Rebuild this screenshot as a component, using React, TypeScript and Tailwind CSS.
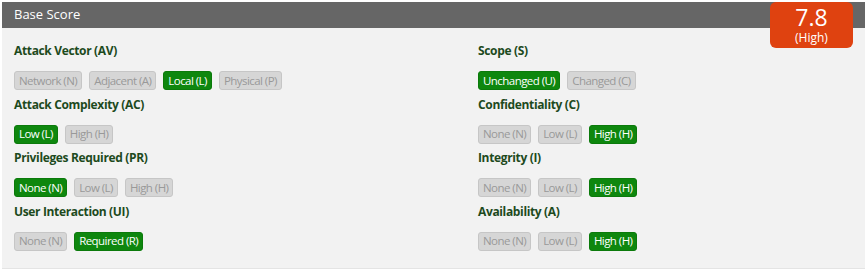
type Metric = { label: string; options: string[]; selected: number };

const left: Metric[] = [
  { label: "Attack Vector (AV)", options: ["Network (N)", "Adjacent (A)", "Local (L)", "Physical (P)"], selected: 2 },
  { label: "Attack Complexity (AC)", options: ["Low (L)", "High (H)"], selected: 0 },
  { label: "Privileges Required (PR)", options: ["None (N)", "Low (L)", "High (H)"], selected: 0 },
  { label: "User Interaction (UI)", options: ["None (N)", "Required (R)"], selected: 1 },
];

const right: Metric[] = [
  { label: "Scope (S)", options: ["Unchanged (U)", "Changed (C)"], selected: 0 },
  { label: "Confidentiality (C)", options: ["None (N)", "Low (L)", "High (H)"], selected: 2 },
  { label: "Integrity (I)", options: ["None (N)", "Low (L)", "High (H)"], selected: 2 },
  { label: "Availability (A)", options: ["None (N)", "Low (L)", "High (H)"], selected: 2 },
];

function MetricGroup({ m }: { m: Metric }) {
  return (
    <div className="flex flex-col">
      <div className="h-4 text-[12px] leading-4 font-bold tracking-[-0.35px] text-[#1d4a1d]">{m.label}</div>
      <div className="mt-3 flex gap-[7px]">
        {m.options.map((o, i) =>
          i === m.selected ? (
            <span
              key={o}
              className="flex h-[19px] items-center rounded-[3px] border border-[#0b7a0b] bg-[#0e870e] px-[4px] text-[11.5px] leading-none tracking-[-0.55px] text-white"
            >
              {o}
            </span>
          ) : (
            <span
              key={o}
              className="flex h-[19px] items-center rounded-[3px] border border-[#c6c6c6] bg-[#d6d6d6] px-[4px] text-[11.5px] leading-none tracking-[-0.55px] text-[#999999]"
            >
              {o}
            </span>
          )
        )}
      </div>
    </div>
  );
}

export default function App() {
  return (
    <div className="h-[275px] w-[867px] bg-white pt-[2px] font-['Open_Sans',sans-serif]">
      <div className="relative mx-[2px] border-b border-[#e4e4e4] bg-[#f2f2f2]">
        <div className="flex h-[26px] items-center bg-[#666666] pl-[12px] text-[13px] text-white">Base Score</div>
        <div className="absolute top-0 right-[12px] flex h-[46px] w-[83px] flex-col items-center justify-center gap-[3px] rounded-[6px] bg-[#df4210] text-white">
          <div className="text-[23px] leading-none">7.8</div>
          <div className="text-[12px] leading-none">(High)</div>
        </div>
        <div className="grid grid-cols-[464px_1fr] pt-[15px] pb-[17px] pl-[12px]">
          <div className="flex flex-col gap-[6.5px]">
            {left.map((m) => (
              <MetricGroup key={m.label} m={m} />
            ))}
          </div>
          <div className="flex flex-col gap-[6.5px]">
            {right.map((m) => (
              <MetricGroup key={m.label} m={m} />
            ))}
          </div>
        </div>
      </div>
    </div>
  );
}
